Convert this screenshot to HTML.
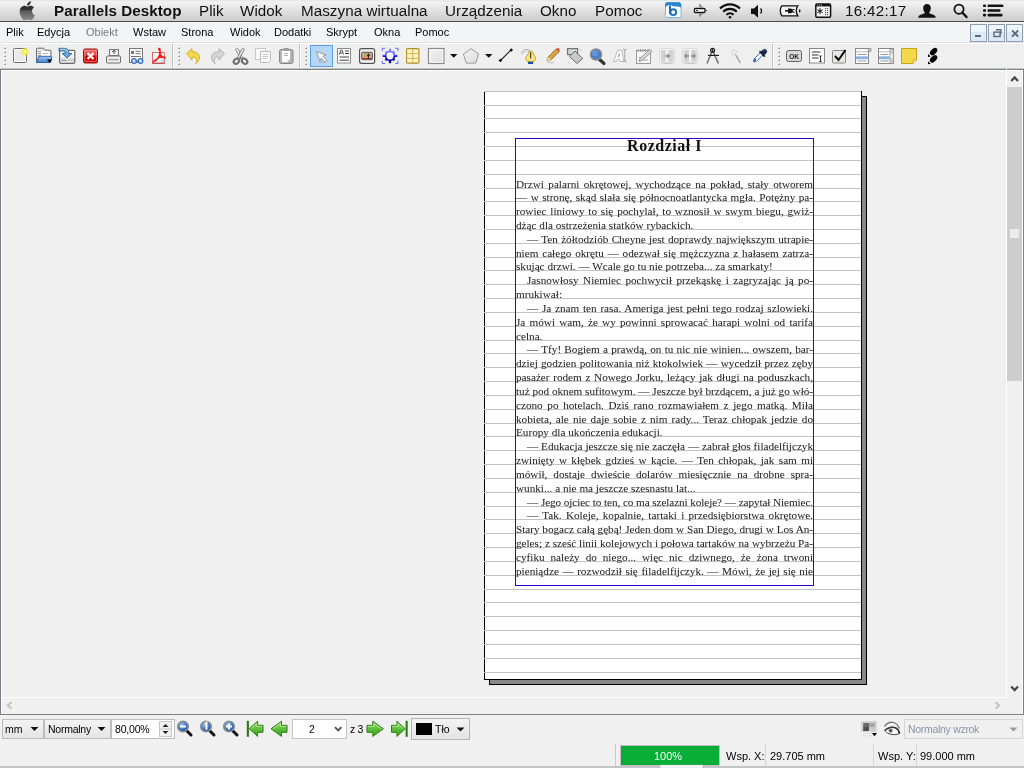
<!DOCTYPE html><html><head><meta charset="utf-8"><style>
*{margin:0;padding:0;box-sizing:border-box}
html,body{width:1024px;height:768px;overflow:hidden;background:#f0f0f0;font-family:"Liberation Sans",sans-serif;position:relative}
.a{position:absolute}
#macbar{left:0;top:0;width:1024px;height:22px;background:linear-gradient(#e4e4e4 0px,#f2f2f2 2px,#e0e0e0 11px,#cbcbcb 21px);border-bottom:1px solid #4c4c4c;will-change:transform}
#macbar span{position:absolute;top:3px;font-size:15.2px;letter-spacing:0.05px;color:#111;white-space:nowrap;line-height:16px}
#menubar{left:0;top:22px;width:1024px;height:21px;background:#f3f4f6;border-bottom:1px solid #e2e3e5}
#menubar span{position:absolute;top:4px;font-size:11px;color:#000;line-height:13px;white-space:nowrap}
#toolbar{left:0;top:43px;width:1024px;height:26px;background:#efefef;border-top:1px solid #fff}
#toolbar svg{position:absolute}
#canvasborder{left:0;top:69px;width:1024px;height:646px;border:1px solid #7a808c}
#canvas{left:1px;top:70px;width:1022px;height:644px;background:#f0f0f0;overflow:hidden;border-top:1px solid #fff;border-left:1px solid #fff;border-right:1px solid #fff}
#tbline{left:0;top:68px;width:1024px;height:1px;background:#c6c6c6}
.gl{position:absolute;left:484px;width:377px;height:1px;background:#c3c3c3}
.tl{position:absolute;left:516px;width:297px;font-family:"Liberation Serif",serif;font-size:11.2px;line-height:13px;height:13px;white-space:nowrap;color:#222;overflow:visible;-webkit-text-stroke:0.04px #333}
.sep{position:absolute;width:1px;background:#b8b8b8}
.grip{position:absolute;width:2px}
.bt2{position:absolute;font-size:11px;line-height:13px;white-space:nowrap;z-index:4}
</style></head><body><div id="root" style="position:absolute;left:0;top:0;width:1024px;height:768px;will-change:transform">
<div id="macbar" class="a">
<svg class="a" style="left:19px;top:-0.5px" width="18" height="20.5" viewBox="0 0 16 18"><defs><linearGradient id="ap" x1="0" y1="0" x2="0" y2="1"><stop offset="0" stop-color="#2a2a2a"/><stop offset="0.45" stop-color="#333"/><stop offset="0.5" stop-color="#5a5a5a"/><stop offset="1" stop-color="#8a8a8a"/></linearGradient></defs><path d="M11.6 9.6c0-2 1.6-2.9 1.7-3-0.9-1.3-2.4-1.5-2.9-1.5-1.2-0.1-2.4 0.7-3 0.7-0.6 0-1.6-0.7-2.6-0.7C3.4 5.1 2 6 1.3 7.3c-1.5 2.6-0.4 6.4 1.1 8.5 0.7 1 1.5 2.2 2.6 2.1 1-0.04 1.4-0.7 2.7-0.7 1.2 0 1.6 0.7 2.7 0.6 1.1 0 1.8-1 2.5-2 0.8-1.1 1.1-2.3 1.1-2.3 0 0-2.2-0.8-2.4-3.3zM9.6 3.7c0.6-0.7 1-1.6 0.9-2.6-0.8 0-1.8 0.6-2.4 1.3-0.5 0.6-1 1.6-0.9 2.5 0.9 0.1 1.8-0.5 2.4-1.2z" fill="url(#ap)"/></svg>
<span style="left:54px;font-weight:bold">Parallels Desktop</span>
<span style="left:199px">Plik</span>
<span style="left:240px">Widok</span>
<span style="left:301px">Maszyna wirtualna</span>
<span style="left:445px">Urządzenia</span>
<span style="left:540px">Okno</span>
<span style="left:595px">Pomoc</span>
<span style="left:845px;letter-spacing:0.3px">16:42:17</span>
</div>
<div id="menubar" class="a">
<span style="left:6px;color:#000">Plik</span>
<span style="left:37px;color:#000">Edycja</span>
<span style="left:86px;color:#7a7a7a">Obiekt</span>
<span style="left:133px;color:#000">Wstaw</span>
<span style="left:181px;color:#000">Strona</span>
<span style="left:230px;color:#000">Widok</span>
<span style="left:274px;color:#000">Dodatki</span>
<span style="left:326px;color:#000">Skrypt</span>
<span style="left:374px;color:#000">Okna</span>
<span style="left:415px;color:#000">Pomoc</span>
</div>
<div id="toolbar" class="a"></div>
<svg class="a" style="left:0;top:0" width="1024" height="70" viewBox="0 0 1024 70"><rect x="4" y="47" width="1" height="1" fill="#fff"/><rect x="5" y="47" width="1" height="1" fill="#c0c0c0"/><rect x="4" y="48" width="1" height="1" fill="#b4b4b4"/><rect x="5" y="48" width="1" height="1" fill="#8a8a8a"/><rect x="4" y="51" width="1" height="1" fill="#fff"/><rect x="5" y="51" width="1" height="1" fill="#c0c0c0"/><rect x="4" y="52" width="1" height="1" fill="#b4b4b4"/><rect x="5" y="52" width="1" height="1" fill="#8a8a8a"/><rect x="4" y="55" width="1" height="1" fill="#fff"/><rect x="5" y="55" width="1" height="1" fill="#c0c0c0"/><rect x="4" y="56" width="1" height="1" fill="#b4b4b4"/><rect x="5" y="56" width="1" height="1" fill="#8a8a8a"/><rect x="4" y="59" width="1" height="1" fill="#fff"/><rect x="5" y="59" width="1" height="1" fill="#c0c0c0"/><rect x="4" y="60" width="1" height="1" fill="#b4b4b4"/><rect x="5" y="60" width="1" height="1" fill="#8a8a8a"/><rect x="4" y="63" width="1" height="1" fill="#fff"/><rect x="5" y="63" width="1" height="1" fill="#c0c0c0"/><rect x="4" y="64" width="1" height="1" fill="#b4b4b4"/><rect x="5" y="64" width="1" height="1" fill="#8a8a8a"/><rect x="13.5" y="48.5" width="13" height="14" rx="1" fill="#e9e9e9" stroke="#6e6e6e"/><rect x="14.5" y="49.5" width="11" height="12" fill="none" stroke="#fff"/><defs><radialGradient id="yg"><stop offset="0" stop-color="#fffbd0"/><stop offset="0.45" stop-color="#f5ec3a"/><stop offset="1" stop-color="#f5ec3a" stop-opacity="0"/></radialGradient><linearGradient id="blu" x1="0" y1="0" x2="0" y2="1"><stop offset="0" stop-color="#a9c8ec"/><stop offset="1" stop-color="#3f7cc8"/></linearGradient><linearGradient id="red" x1="0" y1="0" x2="0" y2="1"><stop offset="0" stop-color="#f07070"/><stop offset="0.5" stop-color="#e33"/><stop offset="0.5" stop-color="#d00"/><stop offset="1" stop-color="#c00"/></linearGradient><linearGradient id="gry" x1="0" y1="0" x2="1" y2="1"><stop offset="0" stop-color="#f4f4f4"/><stop offset="1" stop-color="#dcdcdc"/></linearGradient><linearGradient id="grn" x1="0" y1="0" x2="0" y2="1"><stop offset="0" stop-color="#b6e486"/><stop offset="1" stop-color="#3d9a1e"/></linearGradient></defs><circle cx="25" cy="51.8" r="4.8" fill="url(#yg)"/><path d="M36.5 62.5V49c0-0.5 0.3-0.8 0.8-0.8h6.2l1.5 2h5.2c0.5 0 0.8 0.3 0.8 0.8v5" fill="#e8e8e8" stroke="#6a6a6a"/><path d="M38 51.5h3M38 53.5h3M38 55.5h3" stroke="#a0a0a0" stroke-width="0.9"/><rect x="41" y="51" width="9" height="5.5" fill="#fff"/><path d="M43 53.5h5" stroke="#b0b0b0" stroke-width="0.9"/><path d="M38.8 56.3h12.6c0.4 0 0.6 0.3 0.5 0.7l-1.5 5.5h-13.9z" fill="url(#blu)" stroke="#2f68b8"/><path d="M47 59.6h5.2l-2.6 3.4z" fill="#000"/><defs><linearGradient id="sv" x1="0" y1="0" x2="0" y2="1"><stop offset="0" stop-color="#ffffff"/><stop offset="0.55" stop-color="#f4f4f4"/><stop offset="0.6" stop-color="#d6d6d6"/><stop offset="1" stop-color="#ececec"/></linearGradient></defs><rect x="59.6" y="50.3" width="15.2" height="13" rx="1.2" fill="url(#sv)" stroke="#686868" stroke-width="1.2"/><path d="M61.5 60.5h5M68 60.5h0.8M70.5 60.5h0.8M72.8 60.5h0.8" stroke="#9a9a9a" stroke-width="1"/><path d="M59 48.3h5.5c2.5 0 4.3 1.6 4.3 4.4v0.7h3.2l-5 4.5-5-4.5h3.2v-0.5c0-1.3-0.9-2-2.2-2h-4z" fill="#6fa4d8" stroke="#2a5d9c" stroke-width="0.9"/><path d="M60 49.3h4.5c1.8 0 3 1 3.2 2.8" stroke="#d4e6f6" stroke-width="0.8" fill="none"/><rect x="83.5" y="49" width="14" height="14" rx="1.5" fill="url(#red)" stroke="#9a1010"/><rect x="84.8" y="50.3" width="11.4" height="11.4" fill="none" stroke="#f7a0a0" stroke-width="0.6"/><path d="M87.5 53l6 6M93.5 53l-6 6" stroke="#fff" stroke-width="2.2"/><rect x="109.5" y="49.5" width="9" height="6" fill="#f6f6f6" stroke="#777"/><path d="M114 50.5v3.5M112 52l2-1.8 2 1.8" stroke="#555" fill="none"/><rect x="106.5" y="56" width="14" height="7" rx="1" fill="#ececec" stroke="#6e6e6e"/><rect x="108.5" y="59" width="10" height="1.2" fill="#999"/><rect x="129.5" y="48.5" width="13" height="14" fill="#fafafa" stroke="#777"/><rect x="131" y="51" width="3" height="3" fill="#777"/><path d="M135.5 51.3h5M135.5 53.7h5M131 56.5h10" stroke="#777"/><circle cx="134" cy="61" r="2.3" fill="#cfe0f4" stroke="#3a70c0" stroke-width="1.3"/><circle cx="140.5" cy="61" r="2.3" fill="#cfe0f4" stroke="#3a70c0" stroke-width="1.3"/><path d="M136.3 61h2" stroke="#3a70c0" stroke-width="1.3"/><defs><linearGradient id="pdfg" x1="0" y1="0" x2="1" y2="1"><stop offset="0" stop-color="#ffffff"/><stop offset="0.5" stop-color="#f4fbfd"/><stop offset="1" stop-color="#a8d8e8"/></linearGradient></defs><rect x="152.5" y="52.5" width="11.8" height="11" fill="url(#pdfg)" stroke="#e06a6a" stroke-width="1"/><path d="M152.6 63.2h11.8" stroke="#c83a3a" stroke-width="0.9"/><path d="M153.2 61.8c2.2-1 3.6-2 5-4 1.2-1.8 1.8-3 1.9-4.5 0.1-1.3-0.2-3.2-0.7-4.2M159.6 53.5c0.5 2 1.3 3 2.3 3.4 1 0.4 2 0.4 3.2 1" fill="none" stroke="#f51818" stroke-width="1.7" stroke-linecap="round"/><circle cx="159.3" cy="49" r="1.3" fill="#f51818"/><path d="M158.6 57.8c0.9-1 1.6-2 2-3.2 0.5 1.1 1.3 2 2.2 2.6-1.4 0-2.8 0.2-4.2 0.6z" fill="none" stroke="#f51818" stroke-width="1.1"/><rect x="172" y="44" width="1" height="24" fill="#c4c4c4"/><rect x="173" y="44" width="1" height="24" fill="#fff"/><rect x="178" y="47" width="1" height="1" fill="#fff"/><rect x="179" y="47" width="1" height="1" fill="#c0c0c0"/><rect x="178" y="48" width="1" height="1" fill="#b4b4b4"/><rect x="179" y="48" width="1" height="1" fill="#8a8a8a"/><rect x="178" y="51" width="1" height="1" fill="#fff"/><rect x="179" y="51" width="1" height="1" fill="#c0c0c0"/><rect x="178" y="52" width="1" height="1" fill="#b4b4b4"/><rect x="179" y="52" width="1" height="1" fill="#8a8a8a"/><rect x="178" y="55" width="1" height="1" fill="#fff"/><rect x="179" y="55" width="1" height="1" fill="#c0c0c0"/><rect x="178" y="56" width="1" height="1" fill="#b4b4b4"/><rect x="179" y="56" width="1" height="1" fill="#8a8a8a"/><rect x="178" y="59" width="1" height="1" fill="#fff"/><rect x="179" y="59" width="1" height="1" fill="#c0c0c0"/><rect x="178" y="60" width="1" height="1" fill="#b4b4b4"/><rect x="179" y="60" width="1" height="1" fill="#8a8a8a"/><rect x="178" y="63" width="1" height="1" fill="#fff"/><rect x="179" y="63" width="1" height="1" fill="#c0c0c0"/><rect x="178" y="64" width="1" height="1" fill="#b4b4b4"/><rect x="179" y="64" width="1" height="1" fill="#8a8a8a"/><path d="M186.5 53.5l5.5-5v3.2c4 0 7.5 1.5 7.5 5.5 0 3-2 5.5-4 6.5 1-1.5 1.5-3 1-4.5-0.5-1.5-2-2-4.5-2v3z" fill="#f1d94a" stroke="#c9a826" stroke-width="0.8"/><path d="M224.5 53.5l-5.5-5v3.2c-4 0-7.5 1.5-7.5 5.5 0 3 2 5.5 4 6.5-1-1.5-1.5-3-1-4.5 0.5-1.5 2-2 4.5-2v3z" fill="#d4d4d4" stroke="#aaa" stroke-width="0.8"/><path d="M235.6 49.6c0.4-1.4 2.1-1.5 2.7-0.4l4.4 8.6-1.8 1z" fill="#f4f4f4" stroke="#7c7c7c" stroke-width="0.9"/><path d="M244.4 49.6c-0.4-1.4-2.1-1.5-2.7-0.4l-4.4 8.6 1.8 1z" fill="#e4e4e4" stroke="#7c7c7c" stroke-width="0.9"/><ellipse cx="236.4" cy="61.3" rx="3" ry="2.3" transform="rotate(-40 236.4 61.3)" fill="none" stroke="#6e6e6e" stroke-width="2"/><ellipse cx="244.6" cy="61.3" rx="3" ry="2.3" transform="rotate(40 244.6 61.3)" fill="none" stroke="#6e6e6e" stroke-width="2"/><circle cx="240.5" cy="58" r="0.9" fill="#666"/><rect x="255.5" y="48.5" width="10" height="11" fill="#f8f8f8" stroke="#c8c8c8"/><path d="M260.5 51.5h10v9l-2 2h-8z" fill="#fafafa" stroke="#bdbdbd"/><path d="M262.5 54.5h6M262.5 56.5h6M262.5 58.5h5" stroke="#ccc"/><rect x="279.5" y="49.5" width="13.5" height="14" rx="1.8" fill="#b4b4b4" stroke="#858585"/><path d="M282 51h8v8.5l-2.5 2.5h-5.5z" fill="#fdfdfd"/><path d="M290 59.5l-2.5 2.5v-2.5z" fill="#d8d8d8"/><rect x="283.5" y="48" width="5.5" height="2.5" rx="1" fill="#9a9a9a"/><path d="M284 53.5h4M284 55.5h4" stroke="#aaa" stroke-width="0.9"/><rect x="299" y="44" width="1" height="24" fill="#c4c4c4"/><rect x="300" y="44" width="1" height="24" fill="#fff"/><rect x="305" y="47" width="1" height="1" fill="#fff"/><rect x="306" y="47" width="1" height="1" fill="#c0c0c0"/><rect x="305" y="48" width="1" height="1" fill="#b4b4b4"/><rect x="306" y="48" width="1" height="1" fill="#8a8a8a"/><rect x="305" y="51" width="1" height="1" fill="#fff"/><rect x="306" y="51" width="1" height="1" fill="#c0c0c0"/><rect x="305" y="52" width="1" height="1" fill="#b4b4b4"/><rect x="306" y="52" width="1" height="1" fill="#8a8a8a"/><rect x="305" y="55" width="1" height="1" fill="#fff"/><rect x="306" y="55" width="1" height="1" fill="#c0c0c0"/><rect x="305" y="56" width="1" height="1" fill="#b4b4b4"/><rect x="306" y="56" width="1" height="1" fill="#8a8a8a"/><rect x="305" y="59" width="1" height="1" fill="#fff"/><rect x="306" y="59" width="1" height="1" fill="#c0c0c0"/><rect x="305" y="60" width="1" height="1" fill="#b4b4b4"/><rect x="306" y="60" width="1" height="1" fill="#8a8a8a"/><rect x="305" y="63" width="1" height="1" fill="#fff"/><rect x="306" y="63" width="1" height="1" fill="#c0c0c0"/><rect x="305" y="64" width="1" height="1" fill="#b4b4b4"/><rect x="306" y="64" width="1" height="1" fill="#8a8a8a"/><rect x="310.5" y="45.5" width="22" height="21" fill="#b6d6f6" stroke="#5b9ee6"/><ellipse cx="322" cy="62" rx="4" ry="1.2" fill="#9fb9d6" opacity="0.6"/><path d="M316.5 51.5l9.5 3.5-3 1.3 4 4-1.8 1.8-4-4-1.3 3z" fill="#f6f6f6" stroke="#8a8a8a" stroke-width="0.8"/><rect x="337.5" y="48.5" width="13" height="14.5" fill="#fff" stroke="#8a8a8a"/><path d="M339.3 54.5l1.5-4.5h1.2l1.5 4.5M339.8 53h3" stroke="#555" fill="none" stroke-width="1"/><path d="M345 51h4M345 53.5h4M339.5 57h9.5M339.5 60.2h9.5" stroke="#444"/><rect x="359.6" y="48.6" width="15" height="14.7" rx="2" fill="#fff" stroke="#505050" stroke-width="1.2"/><rect x="361" y="50.3" width="12" height="11" fill="#e2e2e2"/><rect x="361.6" y="52.4" width="10.9" height="7.2" rx="1" fill="#c9a474" stroke="#505050" stroke-width="0.9"/><rect x="362.2" y="58" width="9.7" height="1.2" fill="#b83020"/><circle cx="363.4" cy="54.3" r="0.9" fill="#a8e040"/><path d="M368.4 53.4v5M366.8 55.2h3.4" stroke="#2a2a2a" stroke-width="1.1"/><defs><linearGradient id="gg" x1="0" y1="0" x2="0" y2="1"><stop offset="0" stop-color="#a0a0ff"/><stop offset="0.5" stop-color="#2020f0"/><stop offset="1" stop-color="#000090"/></linearGradient></defs><path d="M382.3 51v-2.7h2.7M395.3 48.3h2.7v2.7M398 60.5v3h-2.7M385 63.5h-2.7v-2.7" stroke="#4a4aff" stroke-width="0.8" fill="none"/><g fill="url(#gg)"><circle cx="390" cy="55.8" r="5.3"/><rect x="388.9" y="48.5" width="2.2" height="14.7"/><rect x="382.6" y="54.7" width="14.8" height="2.2"/><rect x="388.9" y="49.5" width="2.2" height="12.7" transform="rotate(45 390 55.8)"/><rect x="388.9" y="49.5" width="2.2" height="12.7" transform="rotate(-45 390 55.8)"/></g><circle cx="390" cy="55.8" r="3.6" fill="#f4f4f4"/><rect x="406.6" y="48.6" width="12.3" height="14.5" rx="1" fill="#fdf6c4" stroke="#b48c26" stroke-width="1.1"/><path d="M412.75 49.2v13.4M407.2 53.6h11.1M407.2 58.4h11.1" stroke="#c9a43a" stroke-width="0.8"/><rect x="428.5" y="48.5" width="15.5" height="15" fill="url(#gry)" stroke="#8a8a8a" stroke-width="1.2"/><rect x="429.8" y="49.8" width="13" height="12.5" fill="none" stroke="#fff" stroke-width="0.8"/><path d="M450 54h7.5l-3.75 3.8z" fill="#111"/><path d="M471 48.6l7.6 5.5-2.9 9h-9.4l-2.9-9z" fill="url(#gry)" stroke="#909090" stroke-width="0.9"/><path d="M485 54h7.5l-3.75 3.8z" fill="#111"/><path d="M500.5 60.5l10.5-10.5" stroke="#222" stroke-width="1.1"/><rect x="499" y="59.2" width="2.5" height="2.5" transform="rotate(45 500.3 60.5)" fill="#111"/><rect x="510" y="48.7" width="2.5" height="2.5" transform="rotate(45 511.2 50)" fill="#111"/><path d="M521.5 53.5C523 49.5 528 48 531 51.5" stroke="#9a9a9a" fill="none" stroke-width="0.9"/><path d="M522 55C524 51.5 527.5 50.5 530 52" stroke="#d0d0d0" fill="none" stroke-width="0.8"/><path d="M529 51.8h3.5C533 54.5 535.6 56 535.6 58.2 535.6 60.3 534.2 61.6 533 61.6h-4.8C527 61.6 525.8 60.3 525.8 58.2 525.8 56 528.5 54.5 529 51.8z" fill="#f7e27a" stroke="#c9a11e" stroke-width="1"/><path d="M527.5 57.5c1 1.5 5 1.5 6.5 0" stroke="#fff6b8" fill="none" stroke-width="0.8"/><path d="M530.7 52.5v6" stroke="#222" stroke-width="1"/><rect x="528" y="61.8" width="5.2" height="2.2" fill="#1b4ca6"/><path d="M547 61l1.2-4 8.5-8.5 2.8 2.8-8.5 8.5z" fill="#d9a23c" stroke="#8b5e18" stroke-width="0.8"/><path d="M556.2 49l2.6-0.7 0.8 0.8-0.6 2.5z" fill="#e03030"/><path d="M547 61l1.2-4 2.8 2.8z" fill="#f3dcb0"/><ellipse cx="551" cy="62.5" rx="4" ry="0.8" fill="#ccc"/><rect x="567.6" y="48.6" width="10" height="6" fill="#d6d6d6" stroke="#727272" stroke-width="1.2"/><path d="M575 51.2l7.8 7.3-5.8 5-7.8-7.2z" fill="#c9c9c9" stroke="#626262" stroke-width="0.9"/><path d="M579 49.5c1.5 0 2.5 0.8 3 2M570 63.5c-1 0-1.5-0.6-1.5-1.5" stroke="#c8c8c8" fill="none" stroke-width="0.9"/><path d="M598.5 58.5l5.5 5" stroke="#333" stroke-width="3.2" stroke-linecap="round"/><circle cx="596" cy="54.5" r="5.5" fill="#4b80c8" stroke="#8a8a8a" stroke-width="1.5"/><circle cx="595" cy="53.3" r="3" fill="#6fa0e0" opacity="0.7"/><path d="M613.6 61.5l4-11.2h4.6l1.2 11.2h-3.2l-0.3-2.2h-2.7l-0.9 2.2zM618 56.8h1.6l-0.3-3.6z" fill="#fdfdfd" stroke="#b4b4b4" stroke-width="0.9" fill-rule="evenodd"/><path d="M624.8 49.5v12M623 49.3c1 0 1.8 0.4 1.8 1M626.6 49.3c-1 0-1.8 0.4-1.8 1M623 61.7c1 0 1.8-0.4 1.8-1M626.6 61.7c-1 0-1.8-0.4-1.8-1" stroke="#9a9a9a" stroke-width="0.9" fill="none"/><rect x="636.5" y="50.5" width="14" height="13" fill="#f6f6f6" stroke="#999"/><path d="M638 49v3M640.5 49v3M643 49v3M645.5 49v3M648 49v3" stroke="#888" stroke-width="0.8"/><path d="M639 57.5h6M639 60h9" stroke="#aaa"/><path d="M639 61.5l1-3 10-9 2 2-10 9z" fill="#d8d8d8" stroke="#888" stroke-width="0.8"/><rect x="659.5" y="48.5" width="15" height="14.5" rx="1" fill="#f4f4f4" stroke="#dadada"/><ellipse cx="667" cy="63.2" rx="6" ry="0.7" fill="#c8c8c8"/><rect x="661" y="50" width="4.6" height="11.7" rx="0.5" fill="#d2d2d2"/><rect x="668.4" y="50" width="5.2" height="11.7" rx="0.5" fill="#d2d2d2"/><path d="M665 55.3h2.5v-2l2.8 2.7-2.8 2.7v-2h-2.5z" fill="#8a8a8a"/><rect x="682.5" y="48.5" width="15" height="14.5" rx="1" fill="#f4f4f4" stroke="#dadada"/><ellipse cx="690" cy="63.2" rx="6" ry="0.7" fill="#c8c8c8"/><rect x="683.7" y="50" width="5.3" height="11.7" rx="0.5" fill="#d2d2d2"/><rect x="691.2" y="50" width="5.4" height="11.7" rx="0.5" fill="#d2d2d2"/><path d="M689 55.3h-2.3v-2l-2.7 2.7 2.7 2.7v-2h2.3z" fill="#8a8a8a"/><path d="M691 55.3h2.3v-2l2.7 2.7-2.7 2.7v-2h-2.3z" fill="#8a8a8a"/><path d="M711.8 52c-1.5 4-3.5 8-4.8 11.5M713.4 52c1.5 4 3.5 8 5 11.5" stroke="#6f6f6f" stroke-width="1.5" fill="none"/><circle cx="712.6" cy="50.3" r="2" fill="#ccc" stroke="#222" stroke-width="1.2"/><path d="M712.6 49v3" stroke="#111" stroke-width="0.9"/><path d="M708 55.4h11" stroke="#111" stroke-width="1.1"/><path d="M735 54l5.5 9" stroke="#999" stroke-width="1.4"/><path d="M734 49l0.9 2.2 2.3 0.2-1.8 1.5 0.6 2.3-2-1.3-2 1.3 0.6-2.3-1.8-1.5 2.3-0.2z" fill="#f4f4f4" stroke="#ccc" stroke-width="0.7"/><path d="M754.6 61c-0.8-0.8-0.6-2 0.3-2.9l6-6 2.4 2.4-6 6c-0.9 0.9-2 1.3-2.7 0.5z" fill="#fafafa" stroke="#3a6fc2" stroke-width="1"/><path d="M755 59.5l-0.8 1.8" stroke="#2e62b8" stroke-width="2.2" stroke-linecap="round"/><path d="M759.5 52.2l4.8 4.8 0.9-0.9-1-1 1.6-1.6c1.2-1.2 1.2-2.8 0.3-3.6-0.9-0.9-2.4-0.9-3.6 0.3l-1.6 1.6-1-1z" fill="#14254a" stroke="#000" stroke-width="0.5"/><path d="M763 50.5c0.8-0.6 1.8-0.6 2.3 0" stroke="#3c78d8" stroke-width="1" fill="none"/><rect x="772" y="44" width="1" height="24" fill="#c4c4c4"/><rect x="773" y="44" width="1" height="24" fill="#fff"/><rect x="778" y="47" width="1" height="1" fill="#fff"/><rect x="779" y="47" width="1" height="1" fill="#c0c0c0"/><rect x="778" y="48" width="1" height="1" fill="#b4b4b4"/><rect x="779" y="48" width="1" height="1" fill="#8a8a8a"/><rect x="778" y="51" width="1" height="1" fill="#fff"/><rect x="779" y="51" width="1" height="1" fill="#c0c0c0"/><rect x="778" y="52" width="1" height="1" fill="#b4b4b4"/><rect x="779" y="52" width="1" height="1" fill="#8a8a8a"/><rect x="778" y="55" width="1" height="1" fill="#fff"/><rect x="779" y="55" width="1" height="1" fill="#c0c0c0"/><rect x="778" y="56" width="1" height="1" fill="#b4b4b4"/><rect x="779" y="56" width="1" height="1" fill="#8a8a8a"/><rect x="778" y="59" width="1" height="1" fill="#fff"/><rect x="779" y="59" width="1" height="1" fill="#c0c0c0"/><rect x="778" y="60" width="1" height="1" fill="#b4b4b4"/><rect x="779" y="60" width="1" height="1" fill="#8a8a8a"/><rect x="778" y="63" width="1" height="1" fill="#fff"/><rect x="779" y="63" width="1" height="1" fill="#c0c0c0"/><rect x="778" y="64" width="1" height="1" fill="#b4b4b4"/><rect x="779" y="64" width="1" height="1" fill="#8a8a8a"/><rect x="786.5" y="50.5" width="15" height="11" rx="2" fill="#d6d6d2" stroke="#666" stroke-width="1"/><text x="794" y="58.8" font-family="Liberation Sans" font-weight="bold" font-size="6.5" text-anchor="middle" fill="#222">OK</text><rect x="809.5" y="48.5" width="15" height="14.5" fill="#fff" stroke="#888"/><path d="M812 52h8.5M812 55h6.5M812 58h6.5" stroke="#333"/><path d="M820.5 56v5.5M819.3 56h2.4M819.3 61.5h2.4" stroke="#222" stroke-width="0.9"/><rect x="832.5" y="50.5" width="13" height="12.5" rx="1" fill="#e8e8e4" stroke="#888"/><path d="M835 56l3.5 4 7-10" fill="none" stroke="#000" stroke-width="2"/><rect x="855.5" y="48.5" width="13" height="15" fill="#fff" stroke="#888"/><rect x="868" y="48.5" width="3" height="3" fill="#bbb" stroke="#888" stroke-width="0.6"/><rect x="856.5" y="49.5" width="11" height="2" fill="#fff"/><path d="M856 51.8h12.5" stroke="#888" stroke-width="0.6"/><path d="M857.5 54.5h9M857.5 61h9" stroke="#999"/><rect x="856" y="56.3" width="12.5" height="3" fill="#8fb4dc"/><rect x="878.5" y="48.5" width="15" height="15" fill="#fff" stroke="#888"/><rect x="890" y="49" width="3.5" height="14.5" fill="#ccc" stroke="#888" stroke-width="0.6"/><rect x="890.5" y="54" width="2.5" height="4.5" fill="#eee"/><path d="M879 51.8h11" stroke="#888" stroke-width="0.6"/><path d="M880.5 54.5h8M880.5 61h8" stroke="#999"/><rect x="879" y="56.3" width="11" height="3" fill="#8fb4dc"/><path d="M901.5 48.5h15v11.5l-3.5 3.5h-11.5z" fill="#f2d84a" stroke="#c9a020"/><path d="M913 63.5v-3.5h3.5" fill="#fff6c0" stroke="#c9a020" stroke-width="0.8"/><g fill="#000"><ellipse cx="933.6" cy="51.6" rx="4.4" ry="2.7" transform="rotate(-45 933.6 51.6)"/><ellipse cx="933.6" cy="58.8" rx="4.4" ry="2.7" transform="rotate(-45 933.6 58.8)"/><path d="M928 54l2.8 2.6-2.8 0.4z"/><path d="M928 61.2l2.8 2.6-2.8 0.4z"/></g><path d="M928.3 53.3l3.3 3M928.3 60.5l3.3 3" stroke="#f0f0f0" stroke-width="0.9"/></svg>
<svg class="a" style="left:0;top:0;z-index:5" width="1024" height="44" viewBox="0 0 1024 44"><rect x="665.5" y="2.5" width="15.5" height="15" rx="2.2" fill="#fff" stroke="#7ab4e6" stroke-width="1"/><path d="M665 4.6c0-1.3 1-2.4 2.4-2.4h11.2c1.3 0 2.4 1.1 2.4 2.4v3.2c-2-1.3-3.6-1.3-5.4-1.2-2.8 0.2-5.2-2.3-8.2-0.8-1 0.5-2 1.1-2.4 1.8z" fill="#2c84d0"/><path d="M670 5.2v8.6" stroke="#fff" stroke-width="3.4"/><circle cx="673.3" cy="12.2" r="2.9" fill="none" stroke="#fff" stroke-width="3.2"/><path d="M670 5.2v8.8" stroke="#1b6fbf" stroke-width="2"/><circle cx="673.3" cy="12.2" r="2.9" fill="none" stroke="#1b6fbf" stroke-width="1.9"/><path d="M699.2 3.2v4h3.8z" fill="#8a8a8a"/><path d="M699.2 17.6v-4h3.8z" fill="#8a8a8a"/><rect x="694.4" y="8.5" width="10.6" height="4" rx="1" fill="#fff" stroke="#111" stroke-width="1.3"/><ellipse cx="697" cy="10.5" rx="1.1" ry="0.6" fill="#111"/><circle cx="706.6" cy="10.5" r="0.6" fill="#222"/><g fill="none" stroke="#111" stroke-width="2.2"><path d="M720 8.5a14 14 0 0 1 20 0"/><path d="M723.2 11.7a9.5 9.5 0 0 1 13.6 0"/><path d="M726.5 14.8a5 5 0 0 1 7 0"/></g><circle cx="730" cy="17.3" r="1.3" fill="#111"/><path d="M751 8.5h3l4-3.8v13l-4-3.8h-3z" fill="#111"/><path d="M760.5 8.5a3.5 3.5 0 0 1 0 5" fill="none" stroke="#111" stroke-width="1.3"/><path d="M781.8 5.8h16c-1 1.2-1.5 3-1.5 5s0.5 3.8 1.5 5h-16c-1-1.2-1.5-3-1.5-5s0.5-3.8 1.5-5z" fill="#f2f2f2" stroke="#111" stroke-width="1.3"/><path d="M799 9.2a1.6 1.6 0 0 1 0 3.2z" fill="#111"/><path d="M785 10.8h3" stroke="#111" stroke-width="1.5"/><path d="M788 8.4h2.2c1.6 0 2.8 1 2.8 2.4s-1.2 2.4-2.8 2.4h-2.2z" fill="#111"/><path d="M792.5 9.5h2M792.5 12.1h2" stroke="#111" stroke-width="1.1"/><rect x="815.8" y="4" width="14.8" height="13.2" rx="1.2" fill="#f4f4f4" stroke="#111" stroke-width="1.5"/><rect x="815.8" y="4" width="14.8" height="2.4" fill="#111"/><g fill="#fff"><circle cx="817.8" cy="5" r="0.55"/><circle cx="819.7" cy="5" r="0.55"/><circle cx="821.6" cy="5" r="0.55"/></g><path d="M820 8.2v6M817.4 9.7l5.2 3M817.4 12.7l5.2-3" stroke="#111" stroke-width="1"/><g fill="#222"><circle cx="825.6" cy="8.6" r="0.55"/><circle cx="827.6" cy="8.6" r="0.55"/><circle cx="825.6" cy="10.6" r="0.55"/><circle cx="827.6" cy="10.6" r="0.55"/><circle cx="825.6" cy="12.6" r="0.55"/><circle cx="827.6" cy="12.6" r="0.55"/><circle cx="825.6" cy="14.6" r="0.55"/><circle cx="827.6" cy="14.6" r="0.55"/></g><path d="M927 4c2.5 0 3.8 1.8 3.8 4.2 0 1.8-0.8 3.3-1.6 4.2v0.8c3 0.8 5.6 2 6.3 3.2 0.4 0.7 0.2 1.4-0.6 1.4h-15.8c-0.8 0-1-0.7-0.6-1.4 0.7-1.2 3.3-2.4 6.3-3.2v-0.8c-0.8-0.9-1.6-2.4-1.6-4.2 0-2.4 1.3-4.2 3.8-4.2z" fill="#111"/><circle cx="959" cy="9.2" r="4.6" fill="none" stroke="#111" stroke-width="1.8"/><path d="M962.3 12.5l4.2 4.5" stroke="#111" stroke-width="2.4" stroke-linecap="round"/><g fill="#111"><rect x="983" y="4.5" width="3" height="2.6" rx="1"/><rect x="983" y="9.2" width="3" height="2.6" rx="1"/><rect x="983" y="13.8" width="3" height="2.6" rx="1"/><rect x="987.5" y="4.5" width="16" height="2.6" rx="1.2"/><rect x="987.5" y="9.2" width="13" height="2.6" rx="1.2"/><rect x="987.5" y="13.8" width="15" height="2.6" rx="1.2"/></g><rect x="970.5" y="24.5" width="16" height="17" fill="#dde9f6" stroke="#8e9db0"/><rect x="971" y="25" width="15" height="7" fill="#eef4fb"/><rect x="988.5" y="24.5" width="16" height="17" fill="#dde9f6" stroke="#8e9db0"/><rect x="989" y="25" width="15" height="7" fill="#eef4fb"/><rect x="1006.5" y="24.5" width="16" height="17" fill="#dde9f6" stroke="#8e9db0"/><rect x="1007" y="25" width="15" height="7" fill="#eef4fb"/><rect x="975" y="35" width="6" height="2" fill="#5f6a78"/><rect x="993.9" y="32.1" width="6.2" height="4.4" fill="none" stroke="#5f6a78" stroke-width="1.4"/><path d="M995.9 29.7h5v4.4" fill="none" stroke="#5f6a78" stroke-width="1.4"/><path d="M1012 30.4l6.2 6.2M1018.2 30.4l-6.2 6.2" stroke="#5f6a78" stroke-width="1.9"/></svg>
<div id="canvasborder" class="a"></div>
<div id="canvas" class="a"></div>
<div id="tbline" class="a"></div>
<div class="a" style="left:489px;top:96px;width:378px;height:589px;background:#888;border:1px solid #000"></div>
<div class="a" style="left:484px;top:91px;width:378px;height:589px;background:#fff;border:1px solid #000"></div>
<div class="gl" style="top:91px"></div>
<div class="gl" style="top:105px"></div>
<div class="gl" style="top:118px"></div>
<div class="gl" style="top:132px"></div>
<div class="gl" style="top:146px"></div>
<div class="gl" style="top:160px"></div>
<div class="gl" style="top:174px"></div>
<div class="gl" style="top:188px"></div>
<div class="gl" style="top:201px"></div>
<div class="gl" style="top:215px"></div>
<div class="gl" style="top:229px"></div>
<div class="gl" style="top:243px"></div>
<div class="gl" style="top:257px"></div>
<div class="gl" style="top:270px"></div>
<div class="gl" style="top:284px"></div>
<div class="gl" style="top:298px"></div>
<div class="gl" style="top:312px"></div>
<div class="gl" style="top:326px"></div>
<div class="gl" style="top:340px"></div>
<div class="gl" style="top:353px"></div>
<div class="gl" style="top:367px"></div>
<div class="gl" style="top:381px"></div>
<div class="gl" style="top:395px"></div>
<div class="gl" style="top:409px"></div>
<div class="gl" style="top:423px"></div>
<div class="gl" style="top:436px"></div>
<div class="gl" style="top:450px"></div>
<div class="gl" style="top:464px"></div>
<div class="gl" style="top:478px"></div>
<div class="gl" style="top:492px"></div>
<div class="gl" style="top:506px"></div>
<div class="gl" style="top:519px"></div>
<div class="gl" style="top:533px"></div>
<div class="gl" style="top:547px"></div>
<div class="gl" style="top:561px"></div>
<div class="gl" style="top:575px"></div>
<div class="gl" style="top:589px"></div>
<div class="gl" style="top:602px"></div>
<div class="gl" style="top:616px"></div>
<div class="gl" style="top:630px"></div>
<div class="gl" style="top:644px"></div>
<div class="gl" style="top:658px"></div>
<div class="gl" style="top:672px"></div>
<div class="a" style="left:516px;top:137px;width:297px;text-align:center;font-family:'Liberation Serif',serif;font-weight:bold;font-size:16px;letter-spacing:0.5px;line-height:17px;color:#111">Rozdział I</div>
<div class="tl" style="top:177.72px;left:516px;width:297px;text-align:justify;text-align-last:justify;">Drzwi palarni okrętowej, wychodzące na pokład, stały otworem</div>
<div class="tl" style="top:190.72px;left:516px;width:297px;text-align:justify;text-align-last:justify;">— w stronę, skąd slała się północnoatlantycka mgła. Potężny pa-</div>
<div class="tl" style="top:204.72px;left:516px;width:297px;text-align:justify;text-align-last:justify;">rowiec liniowy to się pochylał, to wznosił w swym biegu, gwiż-</div>
<div class="tl" style="top:218.72px;left:516px;width:297px;">dżąc dla ostrzeżenia statków rybackich.</div>
<div class="tl" style="top:232.72px;left:527px;width:286px;text-align:justify;text-align-last:justify;">— Ten żółtodziób Cheyne jest doprawdy największym utrapie-</div>
<div class="tl" style="top:246.72px;left:516px;width:297px;text-align:justify;text-align-last:justify;">niem całego okrętu — odezwał się mężczyzna z hałasem zatrza-</div>
<div class="tl" style="top:259.72px;left:516px;width:297px;">skując drzwi. — Wcale go tu nie potrzeba... za smarkaty!</div>
<div class="tl" style="top:273.72px;left:527px;width:286px;text-align:justify;text-align-last:justify;">Jasnowłosy Niemiec pochwycił przekąskę i zagryzając ją po-</div>
<div class="tl" style="top:287.72px;left:516px;width:297px;">mrukiwał:</div>
<div class="tl" style="top:301.72px;left:527px;width:286px;text-align:justify;text-align-last:justify;">— Ja znam ten rasa. Ameriga jest pełni tego rodzaj szlowieki.</div>
<div class="tl" style="top:315.72px;left:516px;width:297px;text-align:justify;text-align-last:justify;">Ja mówi wam, że wy powinni sprowacać harapi wolni od tarifa</div>
<div class="tl" style="top:329.72px;left:516px;width:297px;">celna.</div>
<div class="tl" style="top:342.72px;left:527px;width:286px;text-align:justify;text-align-last:justify;">— Tfy! Bogiem a prawdą, on tu nic nie winien... owszem, bar-</div>
<div class="tl" style="top:356.72px;left:516px;width:297px;text-align:justify;text-align-last:justify;">dziej godzien politowania niż ktokolwiek — wycedził przez zęby</div>
<div class="tl" style="top:370.72px;left:516px;width:297px;text-align:justify;text-align-last:justify;">pasażer rodem z Nowego Jorku, leżący jak długi na poduszkach,</div>
<div class="tl" style="top:384.72px;left:516px;width:297px;text-align:justify;text-align-last:justify;letter-spacing:-0.032px;">tuż pod oknem sufitowym. — Jeszcze był brzdącem, a już go włó-</div>
<div class="tl" style="top:398.72px;left:516px;width:297px;text-align:justify;text-align-last:justify;">czono po hotelach. Dziś rano rozmawiałem z jego matką. Miła</div>
<div class="tl" style="top:412.72px;left:516px;width:297px;text-align:justify;text-align-last:justify;">kobieta, ale nie daje sobie z nim rady... Teraz chłopak jedzie do</div>
<div class="tl" style="top:425.72px;left:516px;width:297px;">Europy dla ukończenia edukacji.</div>
<div class="tl" style="top:439.72px;left:527px;width:286px;text-align:justify;text-align-last:justify;letter-spacing:-0.017px;">— Edukacja jeszcze się nie zaczęła — zabrał głos filadelfijczyk</div>
<div class="tl" style="top:453.72px;left:516px;width:297px;text-align:justify;text-align-last:justify;">zwinięty w kłębek gdzieś w kącie. — Ten chłopak, jak sam mi</div>
<div class="tl" style="top:467.72px;left:516px;width:297px;text-align:justify;text-align-last:justify;">mówił, dostaje dwieście dolarów miesięcznie na drobne spra-</div>
<div class="tl" style="top:481.72px;left:516px;width:297px;">wunki... a nie ma jeszcze szesnastu lat...</div>
<div class="tl" style="top:495.72px;left:527px;width:286px;letter-spacing:-0.097px;text-align:justify;text-align-last:justify;">— Jego ojciec to ten, co ma szelazni koleje? — zapytał Niemiec.</div>
<div class="tl" style="top:508.72px;left:527px;width:286px;text-align:justify;text-align-last:justify;">— Tak. Koleje, kopalnie, tartaki i przedsiębiorstwa okrętowe.</div>
<div class="tl" style="top:522.72px;left:516px;width:297px;text-align:justify;text-align-last:justify;letter-spacing:-0.021px;">Stary bogacz całą gębą! Jeden dom w San Diego, drugi w Los An-</div>
<div class="tl" style="top:536.72px;left:516px;width:297px;text-align:justify;text-align-last:justify;letter-spacing:-0.015px;">geles; z sześć linii kolejowych i połowa tartaków na wybrzeżu Pa-</div>
<div class="tl" style="top:550.72px;left:516px;width:297px;text-align:justify;text-align-last:justify;">cyfiku należy do niego... więc nic dziwnego, że żona trwoni</div>
<div class="tl" style="top:564.72px;left:516px;width:297px;text-align:justify;text-align-last:justify;">pieniądze — rozwodził się filadelfijczyk. — Mówi, że jej się nie</div>
<div class="a" style="left:515px;top:138px;width:299px;height:448px;border:1px solid #3300d0"></div>
<svg class="a" style="left:0;top:0;z-index:3" width="1024" height="768" viewBox="0 0 1024 768"><rect x="1006" y="69" width="1" height="628" fill="#fff"/><path d="M1011.2 81l3.4-3.6 3.4 3.6" fill="none" stroke="#454545" stroke-width="2.2"/><rect x="1007" y="87" width="15" height="294" fill="#cdcdcd"/><rect x="1010" y="229" width="9" height="9" fill="#ececec"/><path d="M1011.2 686.5l3.4 3.6 3.4-3.6" fill="none" stroke="#454545" stroke-width="2.2"/><rect x="1" y="697" width="1005" height="1" fill="#fff"/><path d="M11.5 702.3l-3.8 3.2 3.8 3.2" fill="none" stroke="#c4c4c4" stroke-width="2"/><path d="M995.5 702.3l3.8 3.2-3.8 3.2" fill="none" stroke="#c4c4c4" stroke-width="2"/><defs><linearGradient id="cg" x1="0" y1="0" x2="0" y2="1"><stop offset="0" stop-color="#f3f3f3"/><stop offset="1" stop-color="#e4e4e4"/></linearGradient><linearGradient id="gA" x1="0" y1="0" x2="0" y2="1"><stop offset="0" stop-color="#b4e28a"/><stop offset="1" stop-color="#43a324"/></linearGradient><radialGradient id="zB" cx="0.4" cy="0.35"><stop offset="0" stop-color="#9cc4f0"/><stop offset="1" stop-color="#2e64b5"/></radialGradient></defs><rect x="2.5" y="719.5" width="41" height="19" fill="url(#cg)" stroke="#bcbcbc"/><path d="M30.5 727h8l-4 4z" fill="#111"/><rect x="44.5" y="719.5" width="66" height="19" fill="url(#cg)" stroke="#bcbcbc"/><path d="M97.5 727h8l-4 4z" fill="#111"/><rect x="111.5" y="719.5" width="63" height="19" fill="#fff" stroke="#bcbcbc"/><rect x="159.5" y="721.5" width="12" height="15" fill="#f0f0f0" stroke="#c8c8c8"/><path d="M159.5 729h12" stroke="#c8c8c8"/><path d="M162.5 727l3-3 3 3z" fill="#222"/><path d="M162.5 731l3 3 3-3z" fill="#222"/><path d="M186 730l5 5" stroke="#111" stroke-width="3" stroke-linecap="round"/><circle cx="183" cy="726.5" r="5.3" fill="url(#zB)" stroke="#8f8f8f" stroke-width="1.6"/><rect x="180" y="725.5" width="6" height="2" fill="#fff"/><path d="M209 730l5 5" stroke="#111" stroke-width="3" stroke-linecap="round"/><circle cx="206" cy="726.5" r="5.3" fill="url(#zB)" stroke="#8f8f8f" stroke-width="1.6"/><path d="M205 724l1.5-1.2v7" stroke="#fff" stroke-width="1.8" fill="none"/><path d="M232 730l5 5" stroke="#111" stroke-width="3" stroke-linecap="round"/><circle cx="229" cy="726.5" r="5.3" fill="url(#zB)" stroke="#8f8f8f" stroke-width="1.6"/><rect x="226" y="725.5" width="6" height="2" fill="#fff"/><rect x="228" y="723.5" width="2" height="6" fill="#fff"/><defs><linearGradient id="gA2" x1="0" y1="0" x2="0" y2="1"><stop offset="0" stop-color="#a6e07e"/><stop offset="0.5" stop-color="#5cbf3a"/><stop offset="1" stop-color="#3aa020"/></linearGradient></defs><rect x="246.8" y="720.8" width="2.1" height="16" fill="#2a7a10"/><path d="M249.3 728.8L257.6 721.2V725.3H263V732.3H257.6V736.4Z" fill="url(#gA2)" stroke="#2f7d14" stroke-width="1"/><path d="M271 728.8L281.5 721.2V725.3H287V732.3H281.5V736.4Z" fill="url(#gA2)" stroke="#2f7d14" stroke-width="1"/><path d="M383.3 728.8L372.8 721.2V725.3H367V732.3H372.8V736.4Z" fill="url(#gA2)" stroke="#2f7d14" stroke-width="1"/><path d="M405.2 728.8L396.9 721.2V725.3H391.5V732.3H396.9V736.4Z" fill="url(#gA2)" stroke="#2f7d14" stroke-width="1"/><path d="M251 728.8L256.6 723.6V726.3H262" fill="none" stroke="#c6f0a8" stroke-width="0.7"/><path d="M272.8 728.8L280.5 723.6V726.3H286" fill="none" stroke="#c6f0a8" stroke-width="0.7"/><path d="M381.5 728.8L373.8 723.6V726.3H368" fill="none" stroke="#c6f0a8" stroke-width="0.7"/><path d="M403.4 728.8L397.9 723.6V726.3H392.5" fill="none" stroke="#c6f0a8" stroke-width="0.7"/><rect x="405.6" y="720.8" width="2.1" height="16" fill="#2a7a10"/><rect x="292.5" y="719.5" width="54" height="19" fill="#fff" stroke="#c4c4c4"/><path d="M335 727.2l3.2 3.3 3.2-3.3" fill="none" stroke="#505050" stroke-width="1.9"/><rect x="411.5" y="718.5" width="58" height="21" fill="url(#cg)" stroke="#b4b4b4"/><rect x="416" y="723" width="16" height="12" fill="#000"/><path d="M456.5 727.5h8l-4 4z" fill="#111"/><rect x="861.2" y="721" width="15.6" height="10.8" fill="#d2d2d2"/><rect x="863.2" y="723" width="5.8" height="4" fill="#6a6a6a"/><rect x="869" y="723" width="6" height="4" fill="#a6a6a6"/><rect x="863.2" y="727" width="5.8" height="4" fill="#4e4e4e"/><rect x="869" y="727" width="6" height="4" fill="#cacaca"/><ellipse cx="868" cy="734.6" rx="5" ry="1.3" fill="#fafafa" stroke="#c4c4c4" stroke-width="0.6"/><path d="M872 733h5l-2.5 3.2z" fill="#000"/><path d="M884.5 726.5c2-3.5 6-5 9-4 3 1 5 3.5 5.8 6" fill="none" stroke="#6a6a6a" stroke-width="1.3"/><path d="M884.8 730.5c3-3 8-4 11-2.5 2 1 3.2 3 3.8 5.5-3 1.5-7 1.5-10.5 0.3-2-0.7-3.5-2-4.3-3.3z" fill="#fafafa" stroke="#444" stroke-width="1"/><path d="M884.8 730.5c3-3 8-4 11-2.5 2 1 3.2 3 3.8 5.5" fill="none" stroke="#333" stroke-width="1.6"/><circle cx="890.6" cy="730.6" r="2.3" fill="#9a9a9a"/><circle cx="890.6" cy="730.6" r="1.1" fill="#222"/><rect x="904.5" y="719.5" width="118" height="19" fill="#f0f0f0" stroke="#d6d6d6"/><path d="M1009.5 727.5h8l-4 4z" fill="#9a9a9a"/><rect x="615" y="744" width="1" height="24" fill="#c9c9c9"/><rect x="620.5" y="745.5" width="99" height="20" fill="#06ad36" stroke="#c8bcc8"/><rect x="765" y="744" width="1" height="24" fill="#d6d6d6"/><rect x="873" y="744" width="1" height="24" fill="#d6d6d6"/><rect x="916" y="744" width="1" height="24" fill="#d6d6d6"/><rect x="0" y="766" width="1024" height="2" fill="#c4c4c4"/><rect x="660" y="765" width="43" height="3" fill="#fff" stroke="#aaa" stroke-width="0.5"/></svg>
<span class="bt2" style="left:5px;top:723px;color:#000;font-size:10.5px;">mm</span><span class="bt2" style="left:48px;top:723px;color:#000;font-size:10.5px;letter-spacing:-0.25px">Normalny</span><span class="bt2" style="left:115px;top:723px;color:#000;font-size:10.5px;letter-spacing:-0.2px">80,00%</span><span class="bt2" style="left:309px;top:723px;color:#000;font-size:10.5px;">2</span><span class="bt2" style="left:350px;top:723px;color:#000;font-size:10.5px;letter-spacing:-0.3px">z 3</span><span class="bt2" style="left:435px;top:723px;color:#000;font-size:10.5px;">Tło</span><span class="bt2" style="left:908px;top:723px;color:#8a94a8;font-size:10.5px;letter-spacing:-0.3px">Normalny wzrok</span><span class="bt2" style="left:654px;top:750px;color:#fff;font-size:11px;">100%</span><span class="bt2" style="left:726px;top:750px;color:#000;font-size:11px;">Wsp. X:</span><span class="bt2" style="left:770px;top:750px;color:#000;font-size:11px;">29.705 mm</span><span class="bt2" style="left:878px;top:750px;color:#000;font-size:11px;">Wsp. Y:</span><span class="bt2" style="left:920px;top:750px;color:#000;font-size:11px;">99.000 mm</span>
</div></body></html>
